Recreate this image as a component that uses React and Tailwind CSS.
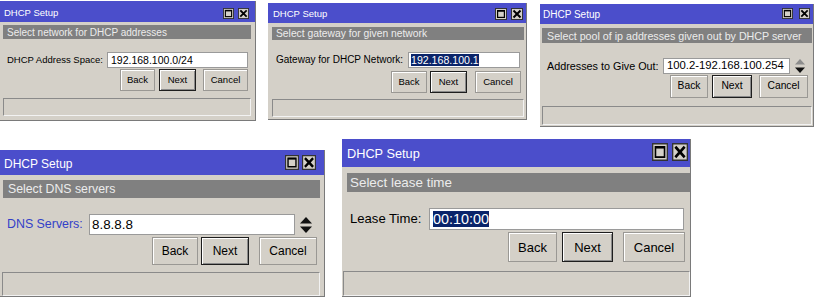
import React from "react";

const BTN =
  "flex items-center justify-center bg-[#d4d0c8] border border-[#9a9894] shadow-[inset_1px_1px_0_#ffffff] text-black leading-none";
const BTN_DEF =
  "flex items-center justify-center bg-[#d4d0c8] border border-[#1e1e1e] shadow-[inset_1px_1px_0_#ffffff,inset_-1px_-1px_0_#8a8a8a] text-black leading-none";

function MaxIcon() {
  return (
    <svg viewBox="0 0 12 12" preserveAspectRatio="none" className="w-full h-full block">
      <rect x="0.5" y="0.5" width="11" height="11" fill="#d4d0c8" stroke="#333333" />
      <rect x="2.6" y="2.6" width="6.8" height="6.8" fill="none" stroke="#000000" strokeWidth="1.2" />
      <line x1="2.6" y1="3" x2="9.4" y2="3" stroke="#000000" strokeWidth="1.4" />
    </svg>
  );
}

function CloseIcon() {
  return (
    <svg viewBox="0 0 12 12" preserveAspectRatio="none" className="w-full h-full block">
      <rect x="0.5" y="0.5" width="11" height="11" fill="#d4d0c8" stroke="#333333" />
      <path d="M3.2 3.2 L8.8 8.8 M8.8 3.2 L3.2 8.8" stroke="#000000" strokeWidth="2" strokeLinecap="square" />
    </svg>
  );
}

function Spinner({ cls, upColor }) {
  return (
    <div className={cls}>
      <svg viewBox="0 0 10 14" preserveAspectRatio="none" className="w-full h-full block">
        <polygon points="5,0 10,5.6 0,5.6" fill={upColor} />
        <polygon points="0,8.4 10,8.4 5,14" fill="#111111" />
      </svg>
    </div>
  );
}

function Dialog({ c, label, value, selected, spinner, upColor = "#111111" }) {
  return (
    <div
      className={
        "flex flex-col shrink-0 bg-[#d4d0c8] border-r border-b border-[#7a7a7a] overflow-hidden " +
        c.win
      }
    >
      <div className={"flex shrink-0 items-start justify-between bg-[#4b4ecb] text-white " + c.title}>
        <span className={"self-center whitespace-nowrap leading-none " + c.titleText}>DHCP Setup</span>
        <div className={"flex " + c.tb}>
          <div className={c.box}>
            <MaxIcon />
          </div>
          <div className={c.box}>
            <CloseIcon />
          </div>
        </div>
      </div>
      <div className={"flex shrink-0 items-center bg-[#808080] text-[#ececec] whitespace-nowrap leading-none " + c.header}>
        {c.headerText}
      </div>
      <div className={"flex shrink-0 items-center " + c.row}>
        <span className={"whitespace-nowrap leading-none " + c.label}>{label}</span>
        <div
          className={
            "ml-auto flex items-center h-full bg-white border border-[#9a9a9a] overflow-hidden whitespace-nowrap leading-none text-black " +
            c.input
          }
        >
          {selected ? (
            <span className="bg-[#0a246a] text-white py-[1px]">{value}</span>
          ) : (
            <span>{value}</span>
          )}
        </div>
        {spinner ? <Spinner cls={c.spin} upColor={upColor} /> : null}
      </div>
      <div className={"flex shrink-0 justify-end " + c.btns}>
        <div className={BTN + " " + c.back}>Back</div>
        <div className={BTN_DEF + " " + c.next}>Next</div>
        <div className={BTN + " " + c.cancel}>Cancel</div>
      </div>
      <div
        className={
          "border border-t-[#8a8a8a] border-l-[#8a8a8a] border-r-[#f2f2f2] border-b-[#f2f2f2] bg-[#d4d0c8] " +
          c.status
        }
      />
    </div>
  );
}

const W1 = {
  win: "mt-[1px] w-[256px] h-[120px]",
  title: "h-[21px] pl-[4px] pr-[6px]",
  titleText: "text-[9.5px] pt-[2px]",
  tb: "mt-[7px] gap-[4px]",
  box: "w-[11px] h-[11px]",
  header: "mt-[3px] ml-[3px] mr-[4px] h-[14px] pl-[4px] pt-[1px] text-[10px]",
  headerText: "Select network for DHCP addresses",
  row: "mt-[13px] h-[16px] pl-[7px] pr-[7px]",
  label: "text-[9.5px] text-black",
  input: "w-[141px] pl-[3px] text-[10.5px]",
  btns: "mt-[1px] h-[22px] pr-[7px] text-[9.5px]",
  back: "w-[35px]",
  next: "w-[37px] ml-[4px]",
  cancel: "w-[45px] ml-[7px]",
  status: "mt-[7px] ml-[3px] mr-[4px] h-[18px]",
};

const W2 = {
  win: "mt-[3px] ml-[12px] w-[259px] h-[117px]",
  title: "h-[20px] pl-[5px] pr-[3px]",
  titleText: "text-[9.5px] pt-[2px]",
  tb: "mt-[5px] gap-[4px]",
  box: "w-[12px] h-[12px]",
  header: "mt-[4px] ml-[4px] mr-[2px] h-[13px] pl-[4px] pt-[1px] text-[10.3px]",
  headerText: "Select gateway for given network",
  row: "mt-[12px] h-[16px] pl-[8px] pr-[6px]",
  label: "text-[10px] text-black",
  input: "w-[112px] pl-[2px] text-[10.6px]",
  btns: "mt-[3px] h-[22px] pr-[5px] text-[9.5px]",
  back: "w-[36px]",
  next: "w-[37px] ml-[3px]",
  cancel: "w-[46px] ml-[8px]",
  status: "mt-[6px] ml-[4px] mr-[2px] h-[18px]",
};

const W3 = {
  win: "mt-[4px] ml-[13px] w-[274px] h-[123px]",
  title: "h-[20px] pl-[3px] pr-[3px]",
  titleText: "text-[10px] pt-[2px]",
  tb: "mt-[4px] gap-[6px]",
  box: "w-[11px] h-[11px]",
  header: "mt-[4px] ml-[2px] mr-[1px] h-[15px] pl-[5px] pt-[1px] text-[10.7px]",
  headerText: "Select pool of ip addresses given out by DHCP server",
  row: "mt-[15px] h-[16px] pl-[7px] pr-[8px]",
  label: "text-[10.8px] text-black",
  input: "w-[127px] pl-[3px] text-[11.3px]",
  spin: "ml-[5px] w-[10px] h-[14px]",
  btns: "mt-[1px] h-[23px] pr-[5px] text-[10.3px]",
  back: "w-[38px]",
  next: "w-[40px] ml-[4px]",
  cancel: "w-[49px] ml-[7px]",
  status: "mt-[8px] ml-[2px] mr-[1px] h-[19px]",
};

const W4 = {
  win: "mt-[11px] w-[325px] h-[147px]",
  title: "h-[25px] pl-[4px] pr-[8px]",
  titleText: "text-[12px] pt-[2px]",
  tb: "mt-[5px] gap-[3px]",
  box: "w-[14px] h-[15px]",
  header: "mt-[5px] ml-[3px] mr-[4px] h-[18px] pl-[5px] pt-[1px] text-[12.3px]",
  headerText: "Select DNS servers",
  row: "mt-[16px] h-[21px] pl-[7px] pr-[12px]",
  label: "text-[12.4px] text-[#3340c8]",
  input: "w-[206px] pl-[2px] text-[13.4px]",
  spin: "ml-[5px] w-[12px] h-[16px]",
  btns: "mt-[2px] h-[28px] pr-[7px] text-[12px]",
  back: "w-[46px]",
  next: "w-[48px] ml-[3px]",
  cancel: "w-[58px] ml-[10px]",
  status: "mt-[7px] ml-[2px] mr-[4px] flex-1",
};

const W5 = {
  win: "ml-[17px] w-[349px] h-[158px]",
  title: "h-[28px] pl-[5px] pr-[2px]",
  titleText: "text-[12.75px] pt-[2px]",
  tb: "mt-[4px] gap-[4px]",
  box: "w-[16px] h-[18px]",
  header: "mt-[6px] ml-[5px] mr-[0px] h-[19px] pl-[3px] pt-[1px] text-[13.4px]",
  headerText: "Select lease time",
  row: "mt-[16px] h-[22px] pl-[8px] pr-[6px]",
  label: "text-[13.1px] text-black",
  input: "w-[255px] pl-[3px] text-[14.4px]",
  btns: "mt-[2px] h-[30px] pr-[5px] text-[13px]",
  back: "w-[49px]",
  next: "w-[51px] ml-[5px]",
  cancel: "w-[62px] ml-[10px]",
  status: "mt-[9px] ml-[1px] mr-[0px] flex-1",
};

export default function App() {
  return (
    <div className="w-[816px] h-[297px] bg-white overflow-hidden flex flex-col font-['Liberation_Sans',Arial,sans-serif]">
      <div className="flex items-start h-[127px] shrink-0">
        <Dialog c={W1} label="DHCP Address Space:" value="192.168.100.0/24" />
        <Dialog c={W2} label="Gateway for DHCP Network:" value="192.168.100.1" selected />
        <Dialog
          c={W3}
          label="Addresses to Give Out:"
          value="100.2-192.168.100.254"
          spinner
          upColor="#8c8c8c"
        />
      </div>
      <div className="flex items-start mt-[12px] h-[158px] shrink-0 overflow-hidden">
        <Dialog c={W4} label="DNS Servers:" value="8.8.8.8" spinner />
        <Dialog c={W5} label="Lease Time:" value="00:10:00" selected />
      </div>
    </div>
  );
}
